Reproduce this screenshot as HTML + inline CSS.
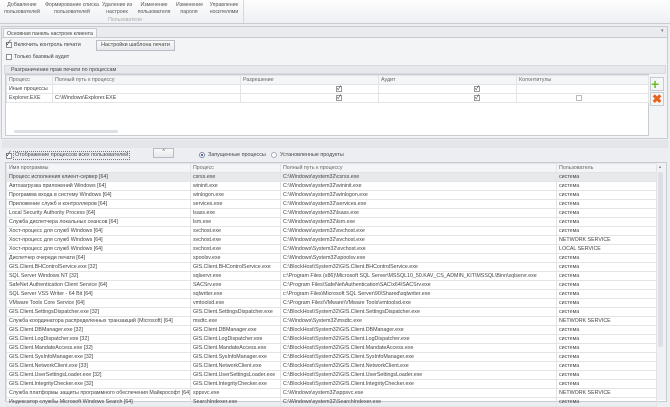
<!DOCTYPE html>
<html><head><meta charset="utf-8"><style>
*{margin:0;padding:0;box-sizing:border-box}
body{width:670px;height:400px;overflow:hidden;background:#eceef1;font-family:"Liberation Sans","Noto Sans CJK SC",sans-serif;font-size:5.4px;color:#444;position:relative}
.a{position:absolute;white-space:nowrap}
.rib{left:0;top:0;width:670px;height:24px;background:linear-gradient(#fdfdfd,#eef0f3);border-bottom:1px solid #c9ccd1}
.rb{text-align:center;line-height:6.5px;font-size:5.2px;color:#555}
.cb{width:6px;height:6px;border:1px solid #8a8f96;background:#fff}
.ck{font-size:7px;line-height:6px;color:#333}
table{border-collapse:collapse;table-layout:fixed}
td{border:1px solid #e2e4e7;padding:0 2px;height:8.8px;line-height:8px;overflow:hidden;white-space:nowrap;font-size:5.3px;color:#444}
tr.h td{background:#f4f5f7;color:#666}
.chk{display:inline-block;width:6px;height:6px;border:1px solid #999;background:#fff;font-size:6px;line-height:5px;text-align:center;vertical-align:middle;color:#333}
</style></head><body>
<div class="a rib"></div>
<div class="a rb" style="left:2px;top:2px;width:40px">Добавление<br>пользователей</div>
<div class="a rb" style="left:44px;top:2px;width:56px">Формирование списка<br>пользователей</div>
<div class="a rb" style="left:102px;top:2px;width:30px">Удаление из<br>настроек</div>
<div class="a rb" style="left:134px;top:2px;width:40px">Изменение<br>пользователя</div>
<div class="a rb" style="left:176px;top:2px;width:26px">Изменение<br>пароля</div>
<div class="a rb" style="left:206px;top:2px;width:36px">Управление<br>носителями</div>
<div class="a rb" style="left:100px;top:17px;width:50px;color:#aaa">Пользователи</div>
<div class="a" style="left:243px;top:0;width:1px;height:23px;background:#d5d8dc"></div>
<div class="a" style="left:1px;top:26px;width:667px;height:113px;border:1px solid #c8cbd0;background:#e9ebee"></div>
<div class="a" style="left:3px;top:28px;width:94px;height:10px;background:#f7f8f9;border:1px solid #c8cbd0;border-bottom:none;padding:2px 3px;font-size:5.2px">Основная панель настроек клиента</div>
<div class="a" style="left:2px;top:37px;width:665px;height:101px;background:#f3f4f6;border-top:1px solid #c8cbd0"></div>
<div class="a" style="left:661px;top:28px;font-size:5px;color:#777">▾</div>
<div class="a cb" style="left:6px;top:42px"></div><div class="a ck" style="left:6px;top:41px">✓</div>
<div class="a" style="left:14px;top:42px">Включить контроль печати</div>
<div class="a cb" style="left:6px;top:54px"></div>
<div class="a" style="left:14px;top:54px">Только базовый аудит</div>
<div class="a" style="left:96px;top:40px;width:79px;height:11px;border:1px solid #b9bdc3;background:linear-gradient(#fafafa,#e6e8eb);text-align:center;line-height:9px">Настройки шаблона печати</div>
<div class="a" style="left:4px;top:65px;width:662px;height:9px;background:#e6e8eb;border:1px solid #d6d9dd;padding:1px 6px">Разграничение прав печати по процессам</div>
<div class="a" style="left:5px;top:74px;width:644px;height:62px;background:#fff;border:1px solid #c8cbd0"></div>
<table class="a" style="left:6px;top:75px;width:642px">
<colgroup><col style="width:46px"><col style="width:188px"><col style="width:138px"><col style="width:138px"><col style="width:132px"></colgroup>
<tr class="h"><td>Процесс</td><td>Полный путь к процессу</td><td>Разрешение</td><td>Аудит</td><td>Колонтитулы</td></tr>
<tr><td>Иные процессы</td><td></td><td style="text-align:right;padding-right:36px"><span class="chk">✓</span></td><td style="text-align:right;padding-right:36px"><span class="chk">✓</span></td><td></td></tr>
<tr><td>Explorer.EXE</td><td>C:\Windows\Explorer.EXE</td><td style="text-align:right;padding-right:36px"><span class="chk">✓</span></td><td style="text-align:right;padding-right:36px"><span class="chk">✓</span></td><td style="text-align:right;padding-right:66px"><span class="chk" style="border-color:#bbb"></span></td></tr>
</table>
<div class="a" style="left:14px;top:130px;width:104px;height:3px;background:#dcdfe3;border-radius:2px"></div>
<div class="a" style="left:650px;top:77px;width:14px;height:14px;border:1px solid #c8cbd0;background:#f4f5f6"></div>
<div class="a" style="left:651px;top:77px;font-size:14px;line-height:14px;color:#6cbf2a;font-weight:bold">+</div>
<div class="a" style="left:650px;top:92px;width:14px;height:14px;border:1px solid #c8cbd0;background:#f4f5f6"></div>
<div class="a" style="left:652px;top:92px;font-size:12px;line-height:14px;color:#e8641e;font-weight:bold">✖</div>
<div class="a" style="left:2px;top:140px;width:666px;height:8px;background:#e3e5e8"></div>
<div class="a cb" style="left:6px;top:153px"></div><div class="a ck" style="left:6px;top:152px">✓</div>
<div class="a" style="left:13px;top:151px;border:1px dotted #777;padding:0 1px;line-height:7px">Отображение процессов всех пользователей</div>
<div class="a" style="left:153px;top:148px;width:21px;height:10px;border:1px solid #b9bdc3;background:linear-gradient(#fafafa,#e6e8eb);text-align:center;font-size:7px;line-height:9px;font-weight:bold">ˆ</div>
<div class="a" style="left:199px;top:152px;width:6px;height:6px;border-radius:50%;border:1px solid #889;background:radial-gradient(#3a6fc0 40%,#fff 45%)"></div>
<div class="a" style="left:208px;top:152px">Запущенные процессы</div>
<div class="a" style="left:271px;top:152px;width:6px;height:6px;border-radius:50%;border:1px solid #aab;background:#fff"></div>
<div class="a" style="left:280px;top:152px">Установленные продукты</div>
<div class="a" style="left:5px;top:162px;width:662px;height:240px;background:#fff;border:1px solid #c8cbd0"></div>
<div class="a" style="left:656px;top:163px;width:10px;height:237px;background:#f0f1f3;border-left:1px solid #dcdfe3"></div>
<div class="a" style="left:658px;top:172px;width:5px;height:175px;background:#dcdfe3;border-radius:2px"></div>
<div class="a" style="left:658px;top:164px;font-size:4px;color:#888">▲</div>
<table class="a" style="left:6px;top:163px;width:650px">
<colgroup><col style="width:184px"><col style="width:90px"><col style="width:276px"><col style="width:100px"></colgroup>
<tr class="h"><td>Имя программы</td><td>Процесс</td><td>Полный путь к процессу</td><td>Пользователь</td></tr>
<tr style="background:#e8e9eb"><td>Процесс исполнения клиент-сервер [64]</td><td>csrss.exe</td><td>C:\Windows\system32\csrss.exe</td><td>система</td></tr>
<tr><td>Автозагрузка приложений Windows [64]</td><td>wininit.exe</td><td>C:\Windows\system32\wininit.exe</td><td>система</td></tr>
<tr><td>Программа входа в систему Windows [64]</td><td>winlogon.exe</td><td>C:\Windows\system32\winlogon.exe</td><td>система</td></tr>
<tr><td>Приложение служб и контроллеров [64]</td><td>services.exe</td><td>C:\Windows\system32\services.exe</td><td>система</td></tr>
<tr><td>Local Security Authority Process [64]</td><td>lsass.exe</td><td>C:\Windows\system32\lsass.exe</td><td>система</td></tr>
<tr><td>Служба диспетчера локальных сеансов [64]</td><td>lsm.exe</td><td>C:\Windows\system32\lsm.exe</td><td>система</td></tr>
<tr><td>Хост-процесс для служб Windows [64]</td><td>svchost.exe</td><td>C:\Windows\system32\svchost.exe</td><td>система</td></tr>
<tr><td>Хост-процесс для служб Windows [64]</td><td>svchost.exe</td><td>C:\Windows\system32\svchost.exe</td><td>NETWORK SERVICE</td></tr>
<tr><td>Хост-процесс для служб Windows [64]</td><td>svchost.exe</td><td>C:\Windows\System32\svchost.exe</td><td>LOCAL SERVICE</td></tr>
<tr><td>Диспетчер очереди печати [64]</td><td>spoolsv.exe</td><td>C:\Windows\System32\spoolsv.exe</td><td>система</td></tr>
<tr><td>GIS.Client.BHControlService.exe [32]</td><td>GIS.Client.BHControlService.exe</td><td>C:\BlockHost\System32\GIS.Client.BHControlService.exe</td><td>система</td></tr>
<tr><td>SQL Server Windows NT [32]</td><td>sqlservr.exe</td><td>c:\Program Files (x86)\Microsoft SQL Server\MSSQL10_50.KAV_CS_ADMIN_KIT\MSSQL\Binn\sqlservr.exe</td><td>система</td></tr>
<tr><td>SafeNet Authentication Client Service [64]</td><td>SACSrv.exe</td><td>C:\Program Files\SafeNet\Authentication\SAC\x64\SACSrv.exe</td><td>система</td></tr>
<tr><td>SQL Server VSS Writer - 64 Bit [64]</td><td>sqlwriter.exe</td><td>c:\Program Files\Microsoft SQL Server\90\Shared\sqlwriter.exe</td><td>система</td></tr>
<tr><td>VMware Tools Core Service [64]</td><td>vmtoolsd.exe</td><td>C:\Program Files\VMware\VMware Tools\vmtoolsd.exe</td><td>система</td></tr>
<tr><td>GIS.Client.SettingsDispatcher.exe [32]</td><td>GIS.Client.SettingsDispatcher.exe</td><td>C:\BlockHost\System32\GIS.Client.SettingsDispatcher.exe</td><td>система</td></tr>
<tr><td>Служба координатора распределенных транзакций (Microsoft) [64]</td><td>msdtc.exe</td><td>C:\Windows\System32\msdtc.exe</td><td>NETWORK SERVICE</td></tr>
<tr><td>GIS.Client.DBManager.exe [32]</td><td>GIS.Client.DBManager.exe</td><td>C:\BlockHost\System32\GIS.Client.DBManager.exe</td><td>система</td></tr>
<tr><td>GIS.Client.LogDispatcher.exe [32]</td><td>GIS.Client.LogDispatcher.exe</td><td>C:\BlockHost\System32\GIS.Client.LogDispatcher.exe</td><td>система</td></tr>
<tr><td>GIS.Client.MandateAccess.exe [32]</td><td>GIS.Client.MandateAccess.exe</td><td>C:\BlockHost\System32\GIS.Client.MandateAccess.exe</td><td>система</td></tr>
<tr><td>GIS.Client.SysInfoManager.exe [32]</td><td>GIS.Client.SysInfoManager.exe</td><td>C:\BlockHost\System32\GIS.Client.SysInfoManager.exe</td><td>система</td></tr>
<tr><td>GIS.Client.NetworkClient.exe [33]</td><td>GIS.Client.NetworkClient.exe</td><td>C:\BlockHost\System32\GIS.Client.NetworkClient.exe</td><td>система</td></tr>
<tr><td>GIS.Client.UserSettingsLoader.exe [32]</td><td>GIS.Client.UserSettingsLoader.exe</td><td>C:\BlockHost\System32\GIS.Client.UserSettingsLoader.exe</td><td>система</td></tr>
<tr><td>GIS.Client.IntegrityChecker.exe [32]</td><td>GIS.Client.IntegrityChecker.exe</td><td>C:\BlockHost\System32\GIS.Client.IntegrityChecker.exe</td><td>система</td></tr>
<tr><td>Служба платформы защиты программного обеспечения Майкрософт [64]</td><td>sppsvc.exe</td><td>C:\Windows\system32\sppsvc.exe</td><td>NETWORK SERVICE</td></tr>
<tr><td>Индексатор службы Microsoft Windows Search [64]</td><td>SearchIndexer.exe</td><td>C:\Windows\system32\SearchIndexer.exe</td><td>система</td></tr>
</table>
</body></html>
